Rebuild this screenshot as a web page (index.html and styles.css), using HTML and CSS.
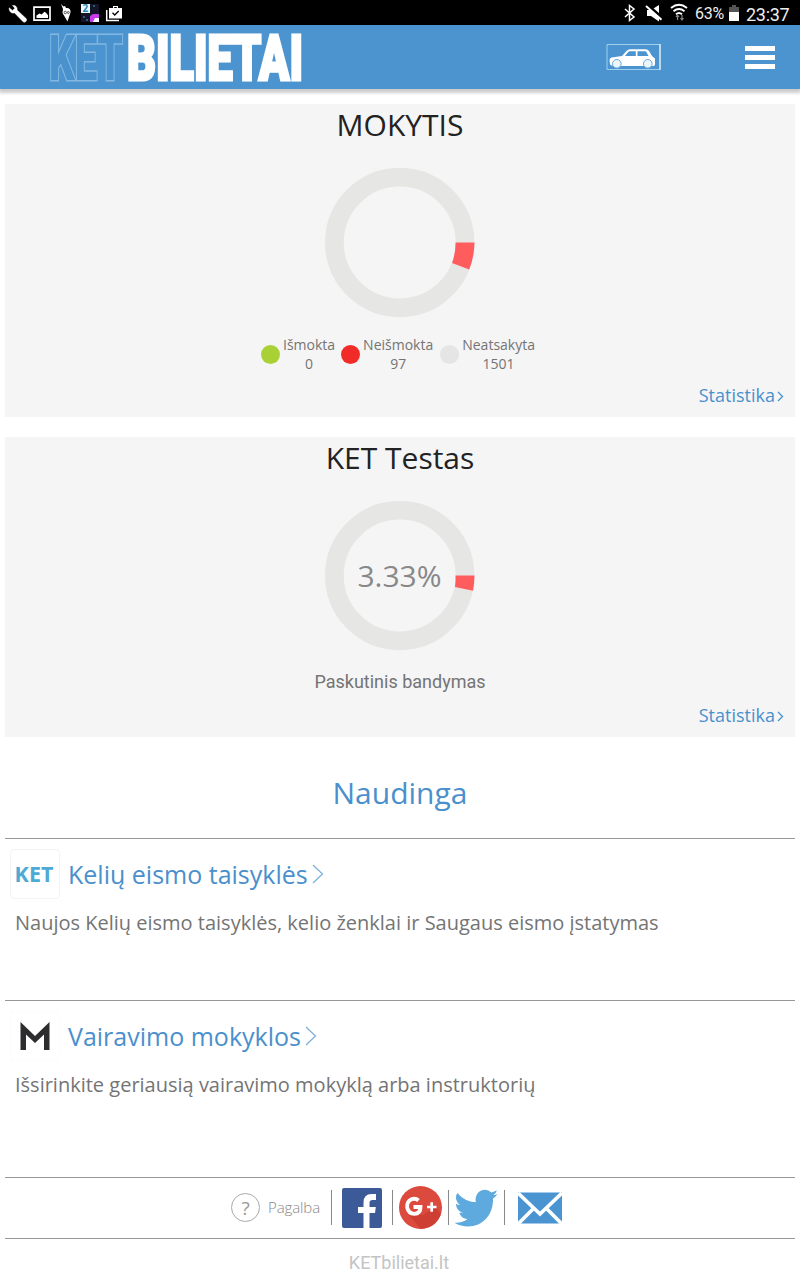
FILE: index.html
```html
<!DOCTYPE html>
<html lang="lt">
  <head>
    <meta charset="UTF-8" />
    <meta name="viewport" content="width=device-width, initial-scale=1.0" />
    <title>KET bilietai</title>
    <link rel="stylesheet" href="styles.css">
  </head>
  <body>
    <!-- Device status bar -->
    <div class="status-bar">
      <svg class="status-left" width="130" height="25" viewBox="0 0 130 25">
        <path d="M12.5 5.500c2.700-.6 5.200 1.500 4.500 4.600l9.300 8.600q.8 1.600-.5 2.900-1.500 1.200-2.900 0l-8.300-8.700c-3 .9-5.800-1.300-5.400-5.100l3.200 2.700 2.500-2.300z" fill="#fff" stroke="#fff" stroke-width=".5" />
        <path d="M34 7.200h16v13H34z" fill="none" stroke="#fff" stroke-width="1.700" />
        <path d="M36.500 18v-2.500l3-2 2 1 3-2.800 1.500 1 2 2.500V18z" fill="#fff" />
        <path d="M61 4l2.500 2.500 1.500-.5 1 2c3-.500 5 1.500 4.500 4.500L67.500 21.500 62.500 13l.5-4z" fill="#fff" />
        <circle cx="65.300" cy="12.500" r="1.200" fill="none" stroke="#333" stroke-width=".8" />
        <circle cx="68.300" cy="12.500" r="1" fill="none" stroke="#333" stroke-width=".8" />
        <path d="M81 4h18v18H81z" fill="#15152a" />
        <path d="M81 4h9v9h-9z" fill="#eef8fd" />
        <text class="badge-two" x="82.500" y="12">2</text>
        <path d="M90 16l3-2h6v5h-3l-1 3h-5z" fill="#c53be8" />
        <path d="M95 18h4v4h-6z" fill="#fff" />
        <path d="M83 17h2M93 6h2M86 20h2" stroke="#39a8bd" />
        <path d="M106.700 10v10.500H119" fill="none" stroke="#fff" stroke-width="1.500" />
        <path d="M109 8h4V6h5v2h4v10.500h-13z" fill="#fff" />
        <path d="M114.200 7h2.600v1h-2.600z" fill="#000" />
        <path d="M112.500 12.800l2.200 2.200 4-4" fill="none" stroke="#000" stroke-width="1.300" />
      </svg>
      <div class="status-right">
        <svg width="110" height="25" viewBox="0 0 110 25">
          <path d="M25 9l9 8-4.500 3.500V5.500L34 9l-9 8" fill="none" stroke="#fff" stroke-width="1.500" />
          <path d="M47 10h4l8-5v16.500l-8-5.500h-4z" fill="#fff" />
          <path d="M46 3.500L63 18.500" stroke="#000" stroke-width="3" />
          <path d="M46 6l15.500 13.800" stroke="#fff" stroke-width="2" />
          <path d="M71 8q8-6.500 16 0M73.500 11.200q5.500-4.500 11 0M76 14.200q3-2.600 6 0" fill="none" stroke="#fff" stroke-width="1.900" />
          <path d="M77.500 20v-5M76 17l1.500-2 1.500 2M82 15v5M80.500 18l1.500 2 1.500-2" fill="none" stroke="#888" stroke-width="1.200" />
        </svg>
        <span class="battery-text">63%</span>
        <svg class="battery" width="10" height="16" viewBox="0 0 10 16">
          <path d="M0 2h3V0h4v2h3v5H0z" fill="#555" />
          <path d="M0 7h10v9H0z" fill="#fff" />
        </svg>
        <span class="clock">23:37</span>
      </div>
    </div>

    <!-- App header -->
    <header class="app-header">
      <div class="logo">
        <svg width="77" height="64" viewBox="0 0 77 64">
          <text class="logo-outline" x="0" y="55" textLength="74" lengthAdjust="spacingAndGlyphs">KET</text>
        </svg>
        <svg width="177" height="64" viewBox="0 0 177 64">
          <text class="logo-solid" x="1" y="55" textLength="176" lengthAdjust="spacingAndGlyphs">BILIETAI</text>
        </svg>
      </div>
      <div class="header-actions">
        <svg width="55" height="28" viewBox="0 0 55 28">
          <path d="M1 1.500h53v25H1z" fill="none" stroke="#9fd0f0" />
          <path d="M54 1v26" stroke="#fff" />
          <path d="M3.500 17q0-1.800 2-2.500L16 13l4.500-5q1.500-1.700 3.500-1.700h15.500q2.500 0 3.500 1.700l3 5 3 2.500v6l-1 1.500H6.500L4 21.500z" fill="#fff" />
          <path d="M19 13l3-3.800q.7-.9 1.800-.9h6V13zM31.500 8.300h7.500q1 0 1.500.9l2 3.800h-11z" fill="#4c94d0" />
          <circle cx="10.800" cy="20.800" r="4.300" fill="#eaf5fc" stroke="#6ea9da" stroke-width="1" />
          <circle cx="41.800" cy="20.800" r="4.300" fill="#eaf5fc" stroke="#6ea9da" stroke-width="1" />
        </svg>
        <div class="menu-icon">
          <span></span>
          <span></span>
          <span></span>
        </div>
      </div>
    </header>

    <main class="content">
      <section class="card card-learn">
        <h2>MOKYTIS</h2>
        <svg class="donut" width="150" height="150" viewBox="0 0 150 150">
          <circle cx="74.700" cy="74.500" r="65.300" fill="none" stroke="#e6e6e4" stroke-width="18.700" />
          <path d="M149.500 74.500A75 75 0 0 1 144.200 101.500L127 95A56 56 0 0 0 130.500 74.500z" fill="#ff5c5e" />
        </svg>
        <div class="legend">
          <div class="legend-item">
            <i class="dot dot-green"></i>
            <span>Išmokta<br />0</span>
          </div>
          <div class="legend-item">
            <i class="dot dot-red"></i>
            <span>Neišmokta<br />97</span>
          </div>
          <div class="legend-item legend-last">
            <i class="dot dot-gray"></i>
            <span>Neatsakyta<br />1501</span>
          </div>
        </div>
        <a class="stats-link">Statistika<svg width="7" height="12" viewBox="0 0 7 12"><path d="M1 2l4.500 4.500L1 11" /></svg></a>
      </section>

      <section class="card card-test">
        <h2>KET Testas</h2>
        <svg class="donut" width="150" height="150" viewBox="0 0 150 150">
          <circle cx="74.700" cy="74.500" r="65.300" fill="none" stroke="#e6e6e4" stroke-width="18.700" />
          <path d="M149.500 74.500A75 75 0 0 1 148 89.700L130 86A56 56 0 0 0 130.500 74.500z" fill="#ff5c5e" />
          <text class="donut-text" x="74.500" y="85.700" text-anchor="middle">3.33%</text>
        </svg>
        <p class="attempt">Paskutinis bandymas</p>
        <a class="stats-link">Statistika<svg width="7" height="12" viewBox="0 0 7 12"><path d="M1 2l4.500 4.500L1 11" /></svg></a>
      </section>

      <h2 class="useful-title">Naudinga</h2>

      <article class="useful">
        <div class="useful-head">
          <span class="useful-icon">KET</span>
          <h3>Kelių eismo taisyklės</h3>
          <svg class="arrow" width="12" height="20" viewBox="0 0 12 20"><path d="M1 1l9.500 9L1 19" /></svg>
        </div>
        <p>Naujos Kelių eismo taisyklės, kelio ženklai ir Saugaus eismo įstatymas</p>
      </article>

      <article class="useful useful-schools">
        <div class="useful-head">
          <span class="useful-icon icon-plain">
            <svg width="30" height="30" viewBox="0 0 30 30">
              <path d="M.5 29V1L15 15 29.500 1v28H24V13.500L15 22l-9-8.500V29z" fill="#2d2d2f" />
            </svg>
          </span>
          <h3>Vairavimo mokyklos</h3>
          <svg class="arrow" width="12" height="20" viewBox="0 0 12 20"><path d="M1 1l9.500 9L1 19" /></svg>
        </div>
        <p>Išsirinkite geriausią vairavimo mokyklą arba instruktorių</p>
      </article>
    </main>

    <footer>
      <div class="footer-links">
        <span class="help-icon">?</span>
        <span class="help-text">Pagalba</span>
        <i class="divider"></i>
        <svg class="facebook" width="40" height="40" viewBox="0 0 40 40">
          <rect width="40" height="40" rx="2" fill="#3c5a98" />
          <path d="M21.500 40V25H16v-6h5.500v-4.500Q21.500 6 29.500 6h4.500v6h-3.500q-3 0-3 3v4h6.300l-.8 6h-5.500v15z" fill="#fff" />
        </svg>
        <i class="divider divider-fb"></i>
        <svg class="google" width="44" height="44" viewBox="0 0 44 44">
          <circle cx="21.500" cy="21.500" r="21.500" fill="#dc4a3e" />
          <path d="M8 27L22 43q15-1 20-15L36 21 24 29z" fill="#c8392e" opacity=".7" />
          <path d="M19.500 14.500q-3-2.700-7-1.200-5 2.200-4.300 8.200 1.300 6.200 7 6.400 6.500-.3 6.300-6.900h-7" fill="none" stroke="#fff" stroke-width="3.800" />
          <path d="M28 21h9.500M32.700 16.200v9.500" stroke="#fff" stroke-width="2.700" />
        </svg>
        <i class="divider divider-google"></i>
        <svg class="twitter" width="44" height="38" viewBox="0 0 44 38">
          <path d="M43.500 5q-2 3-4.500 4.500c.5 16-10 28-25 28-5 0-9.500-1.300-13.500-3.800q7.500.5 13-3.700c-4-.2-7-2.500-8.200-6.200h4C4.500 22.500 2 19 2 14.700q2 1.200 4 1.200C2 13 .8 7.800 3.400 4q7.200 8.700 18.400 9.200C20.500 6 25 .7 31 .7q3.800 0 6.400 2.800 3-.7 5.600-2.200-1 3.200-3.800 4.900 2.300-.3 4.300-1.200z" fill="#5ea9dd" />
        </svg>
        <i class="divider divider-twitter"></i>
        <svg class="mail" width="44" height="32" viewBox="0 0 44 32">
          <path d="M0 .5h44v31H0z" fill="#4a94d2" />
          <path d="M0 1l22 21L44 1M0 32l16-16M44 32L28 16" fill="none" stroke="#fff" stroke-width="3.600" />
        </svg>
      </div>
      <div class="site-name">KETbilietai.lt</div>
    </footer>
  </body>
</html>
```
FILE: styles.css
```css
* {
  box-sizing: border-box;
}

body {
  margin: 0;
  background: #fff;
  color: #747474;
  font-family: "Open Sans", sans-serif;
}

h2,
h3,
p {
  margin: 0;
  font-weight: 400;
}

svg {
  display: block;
  flex: none;
}

/* Status bar */
.status-bar {
  display: flex;
  justify-content: space-between;
  height: 25px;
  background: #000;
  color: #eee;
  font-family: Roboto, sans-serif;
}

.badge-two {
  font: bold 10px "Open Sans", sans-serif;
  fill: #2488bd;
}

.status-right {
  display: flex;
  align-items: center;
  padding-right: 10px;
}

.status-right svg:first-child {
  margin-right: -15px;
}

.battery-text {
  width: 31px;
  margin-top: 2px;
  font-size: 16px;
  letter-spacing: -0.2px;
  white-space: nowrap;
}

.battery {
  margin: 1px 7px 0 3px;
}

.clock {
  width: 44px;
  margin-top: 4px;
  font-size: 18px;
  letter-spacing: -0.3px;
  white-space: nowrap;
}

/* App header */
.app-header {
  display: flex;
  align-items: center;
  justify-content: space-between;
  height: 64px;
  padding: 0 25px 0 49px;
  background: #4c94d0;
  box-shadow: 0 3px 3px 1px rgba(0, 0, 0, 0.2);
}

.logo {
  display: flex;
}

.logo svg {
  overflow: visible;
}

.logo text {
  font-family: Roboto, sans-serif;
  font-size: 63px;
  font-weight: 900;
  paint-order: stroke;
}

.logo-outline {
  fill: #4a92ce;
  stroke: #82b8e2;
  stroke-width: 3px;
}

.logo-solid {
  fill: #fff;
  stroke: #fff;
  stroke-width: 3px;
}

.header-actions {
  display: flex;
  align-items: center;
  gap: 84px;
}

.menu-icon {
  display: grid;
  gap: 4px;
  width: 30px;
}

.menu-icon span {
  height: 5px;
  background: #fff;
}

/* Statistics cards */
.content {
  padding: 15px 5px 0;
}

.card {
  display: flex;
  flex-direction: column;
  align-items: center;
  margin-bottom: 20px;
  background: #f5f5f5;
}

.card-learn {
  height: 313px;
}

.card-test {
  height: 300px;
}

.card h2 {
  height: 42px;
  color: #222;
  font-size: 30px;
  line-height: 42px;
}

.donut {
  margin-top: 22px;
}

.donut-text {
  fill: #888;
  font-size: 30px;
}

.legend {
  display: flex;
  align-items: center;
  margin-top: 17px;
  margin-right: 4px;
  font-size: 14px;
  line-height: 19px;
  text-align: center;
}

.legend-item {
  display: flex;
  align-items: center;
  gap: 3px;
  margin-right: 6px;
}

.legend-last {
  margin-right: 0;
}

.dot {
  width: 19px;
  height: 19px;
  border-radius: 50%;
}

.dot-green {
  background: #a9d136;
}

.dot-red {
  background: #f02b28;
}

.dot-gray {
  margin-left: 1px;
  background: #e5e5e5;
}

.stats-link {
  display: flex;
  align-items: center;
  align-self: flex-end;
  gap: 2px;
  margin: auto 11px 9px 0;
  color: #4a90cd;
  font-size: 18px;
  line-height: 25px;
}

.stats-link path {
  fill: none;
  stroke: #4a90cd;
  stroke-width: 1.3px;
}

.attempt {
  margin-top: 20px;
  font-family: Roboto, sans-serif;
  font-size: 18px;
  line-height: 22px;
}

/* Useful links */
.useful-title {
  height: 81px;
  padding-top: 15px;
  color: #4a90cd;
  font-size: 30px;
  line-height: 42px;
  text-align: center;
}

.useful {
  height: 162px;
  border-top: 1px solid #979797;
  padding: 10px 5px 0;
}

.useful-head {
  display: flex;
  align-items: center;
  height: 50px;
}

.useful-icon {
  display: flex;
  align-items: center;
  justify-content: center;
  width: 50px;
  height: 50px;
  margin-right: 8px;
  padding: 0 2px 2px 0;
  border: 1px solid #f4f4f4;
  border-radius: 4px;
  color: #4daad4;
  font-size: 21.500px;
  font-weight: 700;
}

.icon-plain {
  padding: 0;
  border-color: #fcfcfc;
}

.useful h3 {
  color: #4a90cd;
  font-size: 25px;
  line-height: 36px;
}

.arrow {
  margin-left: 4px;
}

.arrow path {
  fill: none;
  stroke: #7badd8;
  stroke-width: 1.2px;
}

.useful p {
  margin: 10px 5px 0;
  font-size: 20px;
  line-height: 28px;
}

.useful-schools {
  height: 177px;
}

/* Footer */
footer {
  margin: 0 5px;
}

.footer-links {
  display: flex;
  align-items: center;
  height: 62px;
  padding: 0 0 1px 226px;
  border-top: 1px solid #979797;
  border-bottom: 1px solid #979797;
}

.help-icon {
  display: flex;
  align-items: center;
  justify-content: center;
  width: 29px;
  height: 29px;
  border: 1.500px solid #aaa;
  border-radius: 50%;
  color: #999;
  font-size: 19px;
}

.help-text {
  width: 53px;
  margin: -2px 10px 0 8px;
  color: #888;
  font-size: 15px;
  font-weight: 300;
  letter-spacing: -0.1px;
  white-space: nowrap;
}

.divider {
  width: 1px;
  height: 35px;
  margin-right: 10px;
  background: #888;
}

.divider-fb {
  margin: 0 6px 0 10px;
}

.divider-google {
  margin: 0 5px 0 5px;
}

.divider-twitter {
  margin: 0 13px 0 6px;
}

.site-name {
  padding: 13px 2px 0 0;
  color: #c4c4c4;
  font-family: Roboto, sans-serif;
  font-size: 18px;
  line-height: 22px;
  text-align: center;
}
```
